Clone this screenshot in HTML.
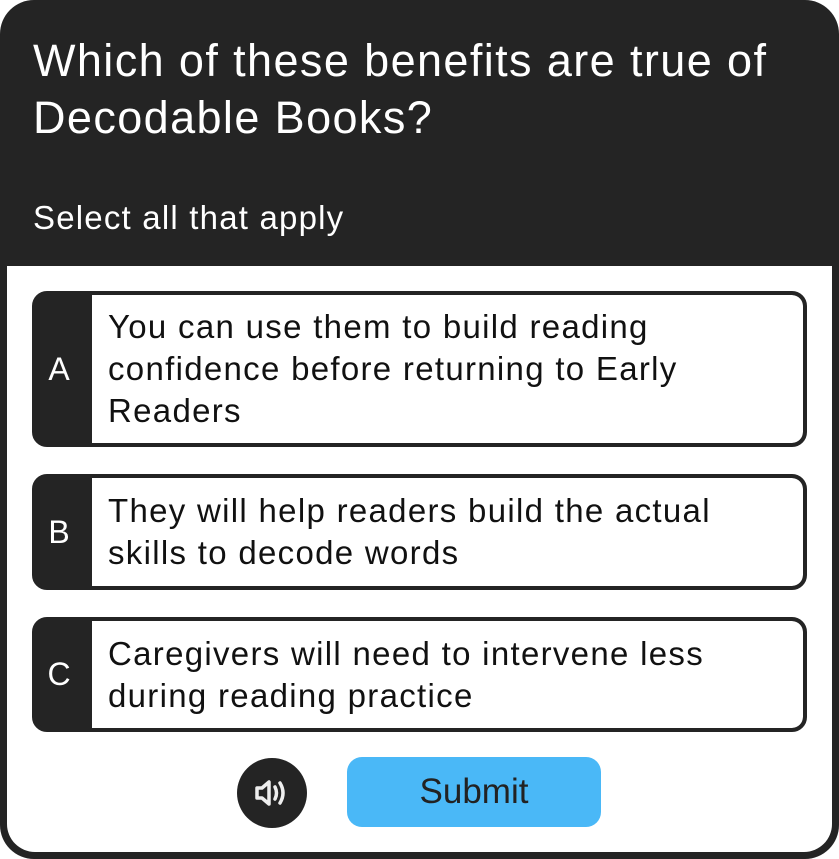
<!DOCTYPE html>
<html><head><style>
*{margin:0;padding:0;box-sizing:border-box}
body{width:839px;height:859px;background:#fff;font-family:"Liberation Sans",sans-serif;overflow:hidden;position:relative}
.card{position:absolute;left:0;top:0;width:839px;height:859px;background:#242424;border-radius:34px}
.inner{position:absolute;left:7px;top:266px;width:825px;height:586px;background:#fff;border-radius:0 0 28px 28px}
.title{position:absolute;left:33px;top:32px;color:#fff;font-size:45px;letter-spacing:1.4px;line-height:57px;white-space:nowrap}
.sub{position:absolute;left:33px;top:198px;color:#fff;font-size:33px;letter-spacing:1.2px;line-height:40px}
.opt{position:absolute;left:32px;width:775px;border:4px solid #242424;border-radius:15px;background:#242424;overflow:hidden}
.opt .l{position:absolute;left:0;top:0;bottom:0;width:46px;color:#fff;font-size:32px;display:flex;align-items:center;justify-content:center}
.opt .t{position:absolute;left:56px;right:0;top:0;bottom:0;background:#fff;border-radius:0 11px 11px 0;color:#111;font-size:33px;letter-spacing:1.3px;line-height:42px;display:flex;align-items:center;padding:0 16px;white-space:nowrap}
.spk{position:absolute;left:237px;top:758px;width:70px;height:70px;border-radius:50%;background:#242424}
.btn{position:absolute;left:347px;top:757px;width:254px;height:70px;background:#4ab8f7;border-radius:15px;color:#222;font-size:35px;display:flex;align-items:center;justify-content:center}
</style></head><body>
<div class="card"></div>
<div class="title">Which of these benefits are true of<br>Decodable Books?</div>
<div class="sub">Select all that apply</div>
<div class="inner"></div>
<div class="opt" style="top:291px;height:156px"><div class="l">A</div><div class="t">You can use them to build reading<br>confidence before returning to Early<br>Readers</div></div>
<div class="opt" style="top:474px;height:116px"><div class="l">B</div><div class="t">They will help readers build the actual<br>skills to decode words</div></div>
<div class="opt" style="top:617px;height:115px"><div class="l">C</div><div class="t">Caregivers will need to intervene less<br>during reading practice</div></div>
<div class="spk"><svg width="70" height="70" viewBox="0 0 70 70" fill="none" stroke="#eee" stroke-width="3.5" stroke-linejoin="round" stroke-linecap="round"><path d="M20 30h5l7-6v22l-7-6h-5z"/><path d="M38 29q3 6 0 12"/><path d="M43 25q6 10 0 20"/></svg></div>
<div class="btn">Submit</div>
</body></html>
